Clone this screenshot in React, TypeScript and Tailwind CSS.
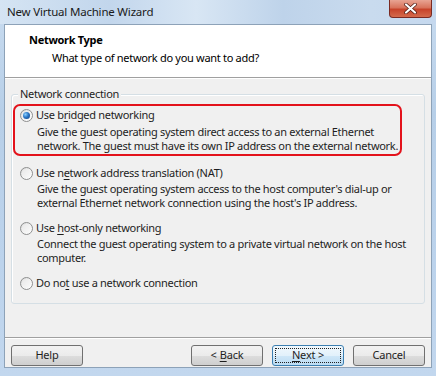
import React from "react";

const font = { fontFamily: '"Segoe UI", "Noto Sans", "Open Sans", sans-serif' };

function Radio({ checked }: { checked?: boolean }) {
  return (
    <span className="relative inline-flex items-center justify-center w-[13px] h-[13px] rounded-full border border-[#8e8f8f] bg-gradient-to-br from-[#d6d6d6] via-[#f4f4f4] to-[#ffffff] shrink-0">
      <span className="w-[9px] h-[9px] rounded-full bg-gradient-to-br from-[#e8e8e8] to-[#fafafa] flex items-center justify-center">
        {checked && (
          <span className="w-[7px] h-[7px] rounded-full bg-[radial-gradient(circle_at_35%_35%,#8ad0ff_0%,#2a76c6_45%,#0e3a78_100%)]" />
        )}
      </span>
    </span>
  );
}

function Btn({ children, primary }: { children: React.ReactNode; primary?: boolean }) {
  return (
    <div
      className={
        "w-[72px] h-[21px] rounded-[3px] border flex items-center justify-center text-[11px] tracking-[-0.2px] text-[#1e1e1e] " +
        (primary
          ? "border-[#3c7fb1] bg-[linear-gradient(#f0f8fd_0%,#e2f1fb_50%,#cfe7f8_51%,#bcdcf3_100%)]"
          : "border-[#707070] bg-[linear-gradient(#f2f2f2_0%,#ebebeb_50%,#dddddd_51%,#cfcfcf_100%)]")
      }
    >
      {primary ? (
        <div className="w-[66px] h-[15px] border border-dotted border-[#202020] flex items-center justify-center">
          {children}
        </div>
      ) : (
        children
      )}
    </div>
  );
}

export default function App() {
  return (
    <div
      className="w-[436px] h-[376px] relative overflow-hidden bg-[linear-gradient(180deg,#c9dcf0_0%,#b7cfe8_30%,#bcd3ec_70%,#c2d7ee_100%)] text-[11px] tracking-[-0.3px]"
      style={font}
    >
      {/* title bar */}
      <div className="h-[24px] flex items-center pl-[7px] text-[11.5px] tracking-[-0.2px] text-[#1a1a1a] bg-[linear-gradient(90deg,#d5e4f3_0%,#c2d6ec_25%,#d8e6f4_45%,#bed3ea_65%,#c9dbee_85%,#c5d8ee_100%)]">
        New Virtual Machine Wizard
      </div>
      <div className="absolute top-0 right-[4px] w-[43px] h-[18px] rounded-b-[4px] border border-t-0 border-[#7a2a22] bg-[linear-gradient(#e8a493_0%,#d8735c_45%,#c7432a_55%,#d46a4c_100%)] flex items-center justify-center">
        <svg width="13" height="11" viewBox="0 0 13 11">
          <path d="M2 1.5 L11 9.5 M11 1.5 L2 9.5" stroke="#4a1810" strokeWidth="3.6" strokeLinecap="round" />
          <path d="M2 1.5 L11 9.5 M11 1.5 L2 9.5" stroke="#ffffff" strokeWidth="2.2" strokeLinecap="round" />
        </svg>
      </div>

      {/* client area */}
      <div className="mx-[4px] h-[344px] border border-[#8da2b8] bg-[#f0f0f0] flex flex-col">
        {/* header */}
        <div className="h-[52px] bg-white flex flex-col pl-[24px] pt-[7px]">
          <div className="font-bold text-black leading-[16px]">Network Type</div>
          <div className="text-black leading-[16px] pl-[23px] mt-[2px]">
            What type of network do you want to add?
          </div>
        </div>
        <div className="h-px bg-[#a0a0a0]" />
        <div className="h-px bg-white" />

        {/* body */}
        <div className="flex-1 px-[6px] pt-[15px]">
          <div className="relative h-[210px] border border-[#d5dfe5] rounded-[3px] shadow-[inset_1px_1px_0_#ffffff]">
            <div className="absolute -top-[9px] left-[6px] px-[2px] bg-[#f0f0f0] leading-[16px] text-[#1e1e1e]">
              Network connection
            </div>

            {/* red annotation */}
            <div className="absolute left-[1px] top-[9px] w-[389px] h-[52px] border-[2.5px] border-[#e3121b] rounded-[7px]" />

            <div className="pl-[8px] pt-[12px] text-[#1e1e1e] whitespace-nowrap">
              <div className="h-[16px] flex items-center gap-[3px]">
                <Radio checked />
                <span>
                  Use b<span className="underline underline-offset-2">r</span>idged networking
                </span>
              </div>
              <div className="pl-[17px] mt-[2px] leading-[14px]">
                Give the guest operating system direct access to an external Ethernet
                <br />
                network. The guest must have its own IP address on the external network.
              </div>

              <div className="h-[16px] flex items-center gap-[3px] mt-[12px]">
                <Radio />
                <span>
                  Use n<span className="underline underline-offset-2">e</span>twork address translation (NAT)
                </span>
              </div>
              <div className="pl-[17px] mt-[1px] leading-[14px]">
                Give the guest operating system access to the host computer's dial-up or
                <br />
                external Ethernet network connection using the host's IP address.
              </div>

              <div className="h-[16px] flex items-center gap-[3px] mt-[10px]">
                <Radio />
                <span>
                  Use <span className="underline underline-offset-2">h</span>ost-only networking
                </span>
              </div>
              <div className="pl-[17px] mt-[1px] leading-[14px]">
                Connect the guest operating system to a private virtual network on the host
                <br />
                computer.
              </div>

              <div className="h-[16px] flex items-center gap-[3px] mt-[10px]">
                <Radio />
                <span>
                  Do no<span className="underline underline-offset-2">t</span> use a network connection
                </span>
              </div>
            </div>
          </div>
        </div>

        {/* separator */}
        <div className="h-px bg-[#a0a0a0]" />
        <div className="h-px bg-white" />

        {/* buttons */}
        <div className="h-[28px] flex items-start pt-[6px] px-[6px]">
          <Btn>Help</Btn>
          <div className="flex-1" />
          <Btn>
            &lt; <span className="underline underline-offset-2 ml-[3px]">B</span>ack
          </Btn>
          <div className="w-[9px]" />
          <Btn primary>
            <span className="underline underline-offset-2">N</span>ext &gt;
          </Btn>
          <div className="w-[9px]" />
          <Btn>Cancel</Btn>
        </div>
      </div>
    </div>
  );
}
